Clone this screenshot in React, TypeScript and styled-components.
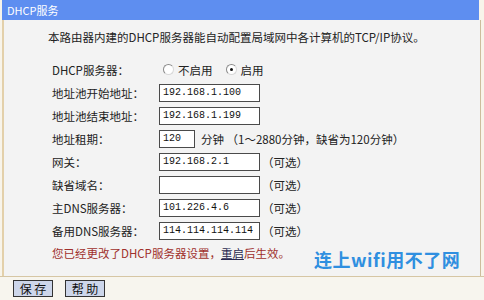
import styled, { createGlobalStyle } from "styled-components"

const GlobalStyle = createGlobalStyle`
    html, body {
        margin: 0;
        padding: 0;
        background: #f8f4ea;
    }
    body {
        font-family: "Noto Sans CJK SC", "Liberation Sans", sans-serif;
        font-size: 11.5px;
        color: #222;
    }
`

const rows = [
    { label: "地址池开始地址：", value: "192.168.1.100" },
    { label: "地址池结束地址：", value: "192.168.1.199" },
]

const optionalRows = [
    { label: "网关：", value: "192.168.2.1" },
    { label: "缺省域名：", value: "" },
    { label: "主DNS服务器：", value: "101.226.4.6" },
    { label: "备用DNS服务器：", value: "114.114.114.114" },
]

export default function App() {
    return (
        <>
            <GlobalStyle />
            <Page>
                <Header>DHCP服务</Header>
                <Panel>
                    <Intro>本路由器内建的DHCP服务器能自动配置局域网中各计算机的TCP/IP协议。</Intro>
                    <Form>
                        <Row>
                            <Label>DHCP服务器：</Label>
                            <RadioGroup>
                                <Radio />
                                <RadioText>不启用</RadioText>
                                <Radio $checked />
                                <RadioText>启用</RadioText>
                            </RadioGroup>
                        </Row>
                        {rows.map((row) => (
                            <Row key={row.label}>
                                <Label>{row.label}</Label>
                                <Input>{row.value}</Input>
                            </Row>
                        ))}
                        <Row>
                            <Label>地址租期：</Label>
                            <Input $small>120</Input>
                            <Hint>分钟 （1～2880分钟，缺省为120分钟）</Hint>
                        </Row>
                        {optionalRows.map((row) => (
                            <Row key={row.label}>
                                <Label>{row.label}</Label>
                                <Input>{row.value}</Input>
                                <Optional>（可选）</Optional>
                            </Row>
                        ))}
                        <Message>
                            您已经更改了DHCP服务器设置，<Restart>重启</Restart>后生效。
                        </Message>
                    </Form>
                    <Watermark>连上wifi用不了网</Watermark>
                </Panel>
                <Footer>
                    <Button>保 存</Button>
                    <Button>帮 助</Button>
                </Footer>
            </Page>
        </>
    )
}

const Page = styled.div`
    width: 484px;
    height: 300px;
    display: flex;
    flex-direction: column;
    overflow: hidden;
`

const Header = styled.div`
    height: 20px;
    margin: 0 5px 0 2px;
    padding-left: 5px;
    background: #5e8ef0;
    color: #fff;
    line-height: 20px;
    font-size: 11px;
`

const Panel = styled.div`
    position: relative;
    margin: 0 3px 0 2px;
    padding: 9px 0 0 44px;
    background: #f3f3f3;
    border-left: 2px solid #e3d0aa;
    border-right: 1px solid #cdbd9c;
    height: 256px;
    box-sizing: border-box;
`

const Intro = styled.div`
    line-height: 16px;
    white-space: nowrap;
`

const Form = styled.div`
    margin-top: 13px;
    padding-left: 4px;
    display: flex;
    flex-direction: column;
`

const Row = styled.div`
    height: 23px;
    display: flex;
    align-items: center;
    white-space: nowrap;
`

const Label = styled.div`
    width: 107px;
    flex: none;
`

const RadioGroup = styled.div`
    display: flex;
    align-items: center;
    padding-left: 4px;
`

const Radio = styled.span<{ $checked?: boolean }>`
    width: 9px;
    height: 9px;
    border-radius: 50%;
    border: 1px solid #8a8a8a;
    border-right-color: #d8d8d8;
    border-bottom-color: #d8d8d8;
    background: #fff;
    display: flex;
    align-items: center;
    justify-content: center;
    margin-right: 4px;
    &::after {
        content: "";
        width: 3px;
        height: 3px;
        border-radius: 50%;
        background: ${(p) => (p.$checked ? "#111" : "transparent")};
    }
`

const RadioText = styled.span`
    margin-right: 13px;
`

const Input = styled.div<{ $small?: boolean }>`
    width: ${(p) => (p.$small ? "31px" : "96px")};
    height: 16px;
    flex: none;
    border: 1px solid #4a4a4a;
    background: #fff;
    box-sizing: content-box;
    padding-left: 3px;
    font-family: "Liberation Mono", monospace;
    font-size: 10px;
    line-height: 16px;
    color: #111;
`

const Hint = styled.span`
    margin-left: 6px;
`

const Optional = styled.span`
    margin-left: 2px;
`

const Message = styled.div`
    height: 21px;
    display: flex;
    align-items: center;
    color: #a0302c;
    white-space: nowrap;
`

const Restart = styled.span`
    color: #2a2a50;
    text-decoration: underline;
`

const Watermark = styled.div`
    position: absolute;
    left: 310px;
    top: 226px;
    font-size: 18px;
    font-weight: 700;
    color: #2f8fe0;
    letter-spacing: 0.5px;
    white-space: nowrap;
`

const Footer = styled.div`
    flex: 1;
    display: flex;
    align-items: center;
    gap: 12px;
    padding-left: 13px;
    border-top: 1px solid #d6c6a4;
    background: #f7f5ee;
`

const Button = styled.div`
    width: 38px;
    height: 15px;
    border: 1px solid #333;
    background: #cdd6ea;
    font-size: 12px;
    line-height: 15px;
    text-align: center;
    color: #111;
`
